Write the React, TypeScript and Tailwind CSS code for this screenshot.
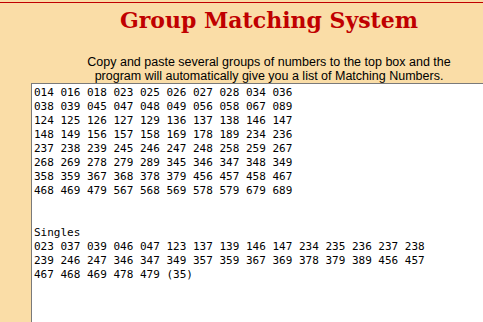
import React from 'react'

const results = [
  '014 016 018 023 025 026 027 028 034 036',
  '038 039 045 047 048 049 056 058 067 089',
  '124 125 126 127 129 136 137 138 146 147',
  '148 149 156 157 158 169 178 189 234 236',
  '237 238 239 245 246 247 248 258 259 267',
  '268 269 278 279 289 345 346 347 348 349',
  '358 359 367 368 378 379 456 457 458 467',
  '468 469 479 567 568 569 578 579 679 689',
  '',
  '',
  'Singles',
  '023 037 039 046 047 123 137 139 146 147 234 235 236 237 238',
  '239 246 247 346 347 349 357 359 367 369 378 379 389 456 457',
  '467 468 469 478 479 (35)',
].join('\n')

export default function App() {
  return (
    <div className='w-[483px] h-[322px] overflow-hidden bg-[#fadda7] pt-[2px]'>
      {/* top rule */}
      <div className='border-t border-[#c00000]'></div>
      {/* header */}
      <div className='pl-[55px] text-center'>
        <h1 className='mt-[3px] text-[22px] leading-[28px] font-bold text-[#c00000] font-["DejaVu_Serif",serif]'>
          Group Matching System
        </h1>
        <p className='mt-[21px] text-[12.5px] leading-[14px] text-black font-["Liberation_Sans",Arial,sans-serif]'>
          Copy and paste several groups of numbers to the top box and the
          <br />
          program will automatically give you a list of Matching Numbers.
        </p>
      </div>
      {/* output box */}
      <div className='pl-[31px]'>
        <textarea
          readOnly
          defaultValue={results}
          className='block w-[480px] h-[260px] p-[2px] bg-white border border-[#7a7a7a] resize-none overflow-hidden outline-none text-[11px] leading-[14px] text-black whitespace-pre font-["DejaVu_Sans_Mono",monospace]'
        />
      </div>
    </div>
  )
}
